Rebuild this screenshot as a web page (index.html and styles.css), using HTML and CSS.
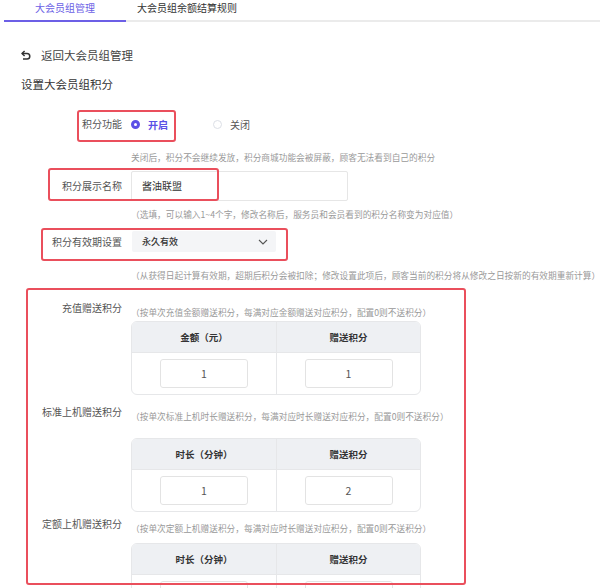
FILE: index.html
```html
<!DOCTYPE html>
<html>

	<head>
		<title>设置大会员组积分</title>
		<meta charset="utf-8">
		<link rel="stylesheet" href="styles.css">
	</head>

	<body>
		<div class="tabs">
			<a class="tab active" href="javascript:;">大会员组管理</a>
			<a class="tab" href="javascript:;">大会员组余额结算规则</a>
		</div>

		<div class="page">
			<a class="back" href="javascript:;">
				<svg class="back-icon" viewBox="0 0 10 10" width="10" height="10">
					<path d="M3.6 1 L1 3.5 L3.6 6" fill="none" stroke="#333" stroke-width="1.5" stroke-linejoin="round"/>
					<path d="M1.4 3.5 H6 A2.8 2.8 0 0 1 6 9.1 H2" fill="none" stroke="#333" stroke-width="1.5"/>
				</svg>
				返回大会员组管理
			</a>
			<div class="title">设置大会员组积分</div>

			<!-- 积分功能 -->
			<div class="row row-switch">
				<span class="label">积分功能</span>
				<label class="radio checked"><i></i>开启</label>
				<label class="radio"><i></i>关闭</label>
				<span class="mark mark-switch"></span>
			</div>
			<div class="hint hint-first">关闭后，积分不会继续发放，积分商城功能会被屏蔽，顾客无法看到自己的积分</div>

			<!-- 积分名称 -->
			<div class="row row-name">
				<span class="label">积分展示名称</span>
				<div class="text-input">酱油联盟</div>
				<span class="mark mark-name"></span>
			</div>
			<div class="hint hint-name">（选填，可以输入1~4个字，修改名称后，服务员和会员看到的积分名称变为对应值）</div>

			<!-- 有效期 -->
			<div class="row row-expire">
				<span class="label">积分有效期设置</span>
				<div class="select">
					<span>永久有效</span>
					<svg viewBox="0 0 10 6" width="10" height="6">
						<path d="M1 1 L5 5 L9 1" fill="none" stroke="#555" stroke-width="1.1"/>
					</svg>
				</div>
				<span class="mark mark-expire"></span>
			</div>
			<div class="hint hint-expire">（从获得日起计算有效期，超期后积分会被扣除；修改设置此项后，顾客当前的积分将从修改之日按新的有效期重新计算）</div>

			<!-- 赠送规则 -->
			<div class="rewards">
				<div class="group group-1">
					<span class="label">充值赠送积分</span>
					<div class="group-body">
						<div class="hint">（按单次充值金额赠送积分，每满对应金额赠送对应积分，配置0则不送积分）</div>
						<div class="table">
							<div class="th">金额（元）</div>
							<div class="th">赠送积分</div>
							<div class="td"><div class="cell-input">1</div></div>
							<div class="td"><div class="cell-input">1</div></div>
						</div>
					</div>
				</div>

				<div class="group group-2">
					<span class="label">标准上机赠送积分</span>
					<div class="group-body">
						<div class="hint">（按单次标准上机时长赠送积分，每满对应时长赠送对应积分，配置0则不送积分）</div>
						<div class="table">
							<div class="th">时长（分钟）</div>
							<div class="th">赠送积分</div>
							<div class="td"><div class="cell-input">1</div></div>
							<div class="td"><div class="cell-input">2</div></div>
						</div>
					</div>
				</div>

				<div class="group group-3">
					<span class="label">定额上机赠送积分</span>
					<div class="group-body">
						<div class="hint">（按单次定额上机赠送积分，每满对应时长赠送对应积分，配置0则不送积分）</div>
						<div class="table">
							<div class="th">时长（分钟）</div>
							<div class="th">赠送积分</div>
							<div class="td"><div class="cell-input">1</div></div>
							<div class="td"><div class="cell-input">1</div></div>
						</div>
					</div>
				</div>

				<span class="mark mark-rewards"></span>
			</div>
		</div>
	</body>

</html>
```

FILE: styles.css
```css
html,
body {
	margin: 0;
	height: 588px;
	overflow: hidden;
	background: #fff;
}

body {
	font-family: "Noto Sans CJK SC", "Noto Sans", sans-serif;
	font-size: 10px;
	color: #333;
}

a {
	text-decoration: none;
}

/* 顶部标签 */
.tabs {
	display: flex;
	margin-left: 4px;
	height: 20px;
	border-bottom: 2px solid #ebebeb;
}

.tab {
	width: 122px;
	height: 20px;
	line-height: 16px;
	text-align: center;
	color: #333;
}

.tab.active {
	color: #6c5fe6;
	border-bottom: 2px solid #6c5fe6;
}

.page {
	padding: 0 21px;
}

.back {
	display: flex;
	align-items: center;
	margin-top: 23px;
	height: 20px;
	font-size: 11.5px;
	color: #444;
}

.back-icon {
	margin-right: 10px;
}

.title {
	margin-top: 9px;
	height: 20px;
	line-height: 20px;
	font-size: 11.5px;
	color: #333;
}

/* 表单行 */
.row {
	position: relative;
	display: flex;
	align-items: center;
}

.label {
	flex-shrink: 0;
	width: 101px;
	margin-right: 9px;
	text-align: right;
	color: #555;
	line-height: 14px;
}

.row-switch {
	margin-top: 18px;
	height: 24px;
}

.radio {
	display: flex;
	align-items: center;
	color: #555;
}

.radio i {
	box-sizing: border-box;
	width: 9px;
	height: 9px;
	margin-right: 8px;
	border: 1px solid #dcdfe6;
	border-radius: 50%;
	background: #fff;
}

.radio.checked {
	color: #5b50e6;
	font-weight: bold;
}

.radio.checked i {
	border: 3px solid #5b50e6;
	background: #fff;
}

.radio + .radio {
	margin-left: 45px;
}

.hint {
	margin-left: 110px;
	height: 14px;
	line-height: 14px;
	font-size: 8.7px;
	color: #999;
	white-space: nowrap;
}

.hint-first {
	margin-top: 15px;
}

.row-name {
	margin-top: 6px;
	height: 30px;
}

.text-input {
	box-sizing: border-box;
	width: 217px;
	height: 30px;
	line-height: 28px;
	padding-left: 10px;
	border: 1px solid #e6e6e6;
	border-radius: 2px;
	color: #333;
}

.hint-name {
	margin-top: 7px;
}

.row-expire {
	margin-top: 9px;
	height: 21px;
}

.select {
	box-sizing: border-box;
	display: flex;
	align-items: center;
	justify-content: space-between;
	width: 144px;
	height: 21px;
	margin-left: 1px;
	padding: 0 8px 0 10px;
	background: #f4f5f7;
	border-radius: 2px;
	font-size: 9px;
	font-weight: 500;
	color: #333;
}

.hint-expire {
	margin-top: 17px;
}

/* 赠送积分 */
.rewards {
	position: relative;
	margin-top: 5px;
}

.group {
	display: flex;
	align-items: flex-start;
}

.group .hint {
	margin: 5px 0 0 0;
}

.group-1 {
	padding-top: 13px;
}

.group-2 {
	margin-top: 10px;
}

.group-3 {
	margin-top: 5px;
}

.table {
	display: grid;
	grid-template-columns: 1fr 1fr;
	width: 290px;
	box-sizing: border-box;
	border: 1px solid #e6e7e9;
	border-radius: 6px;
	overflow: hidden;
}

.group-1 .table {
	margin-top: 1px;
}

.group-2 .table {
	margin-top: 14px;
}

.group-3 .table {
	margin-top: 7px;
}

.th {
	height: 30px;
	line-height: 30px;
	text-align: center;
	font-size: 9.5px;
	font-weight: bold;
	color: #333;
	background: #eef0f3;
	border-bottom: 1px solid #e6e7e9;
}

.td {
	display: flex;
	justify-content: center;
	padding: 6px 0;
}

.th:nth-child(2),
.td:nth-child(4) {
	border-left: 1px solid #e6e7e9;
}

.cell-input {
	box-sizing: border-box;
	width: 88px;
	height: 29px;
	line-height: 27px;
	text-align: center;
	border: 1px solid #e3e3e3;
	border-radius: 3px;
	color: #555;
	font-size: 10.5px;
}

/* 红色标注框 */
.mark {
	position: absolute;
	box-sizing: border-box;
	border: 2px solid #ea4f5c;
	border-radius: 3px;
	pointer-events: none;
}

.mark-switch {
	left: 56px;
	top: -2px;
	width: 99px;
	height: 32px;
}

.mark-name {
	left: 27px;
	top: -3px;
	width: 171px;
	height: 33px;
}

.mark-expire {
	left: 20px;
	top: -3px;
	width: 247px;
	height: 33px;
}

.mark-rewards {
	left: 5px;
	top: 0;
	width: 440px;
	height: 297px;
}
```
